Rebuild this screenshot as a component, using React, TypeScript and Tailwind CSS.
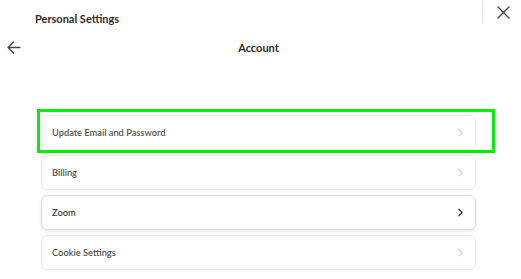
import { ChevronRight } from "lucide-react";

const items = [
  { label: "Update Email and Password", active: false },
  { label: "Billing", active: false },
  { label: "Zoom", active: true },
  { label: "Cookie Settings", active: false },
];

export default function App() {
  return (
    <div
      className="h-[279px] w-[521px] overflow-hidden bg-white text-[#333]"
      style={{ fontFamily: "Lato, 'Noto Sans', sans-serif" }}
    >
      {/* TOP BAR */}
      <div className="flex h-[36px] items-start justify-between">
        <div className="pl-[35px] pt-[11px] text-[11px] font-bold leading-[16px] text-[#2d2d2d]">
          Personal Settings
        </div>
        <div className="mt-[1px] flex h-[22px] items-center border-l border-[#ececec] pl-[14px] pr-[11px]">
          <svg width="13" height="13" viewBox="0 0 13 13" fill="none" stroke="#444" strokeWidth="1.4" strokeLinecap="round">
            <path d="M1 1L12 12M12 1L1 12" />
          </svg>
        </div>
      </div>

      {/* TITLE ROW */}
      <div className="relative flex h-[24px] items-center justify-center">
        <div className="absolute left-[7px] top-[5px]">
          <svg width="14" height="13" viewBox="0 0 14 13" fill="none" stroke="#444" strokeWidth="1.3" strokeLinecap="round" strokeLinejoin="round">
            <path d="M13 6.5H1M6.5 1L1 6.5L6.5 12" />
          </svg>
        </div>
        <div className="ml-[-4px] text-[11px] font-bold text-[#2d2d2d]">Account</div>
      </div>

      {/* LIST */}
      <div className="ml-[41px] mt-[55px] flex w-[435px] flex-col gap-[5px]">
        {items.map((it, i) => (
          <div key={it.label} className="relative">
            {i === 0 && (
              <div className="pointer-events-none absolute left-[-4px] right-[-19px] top-[-6px] bottom-[-3px] border-[3px] border-[#00ee00]" />
            )}
            <div
              className={`flex h-[35px] items-center justify-between rounded-[6px] border bg-white pl-[10px] pr-[8px] text-[9.3px] font-medium ${
                it.active
                  ? "border-[#d9d9d9] text-[#333] shadow-[0_2px_3px_rgba(0,0,0,0.08)]"
                  : "border-[#ebebeb] text-[#444]"
              }`}
            >
              <span>{it.label}</span>
              <ChevronRight
                size={13}
                strokeWidth={it.active ? 2.2 : 1.5}
                color={it.active ? "#333" : "#aaa"}
              />
            </div>
          </div>
        ))}
      </div>
    </div>
  );
}
